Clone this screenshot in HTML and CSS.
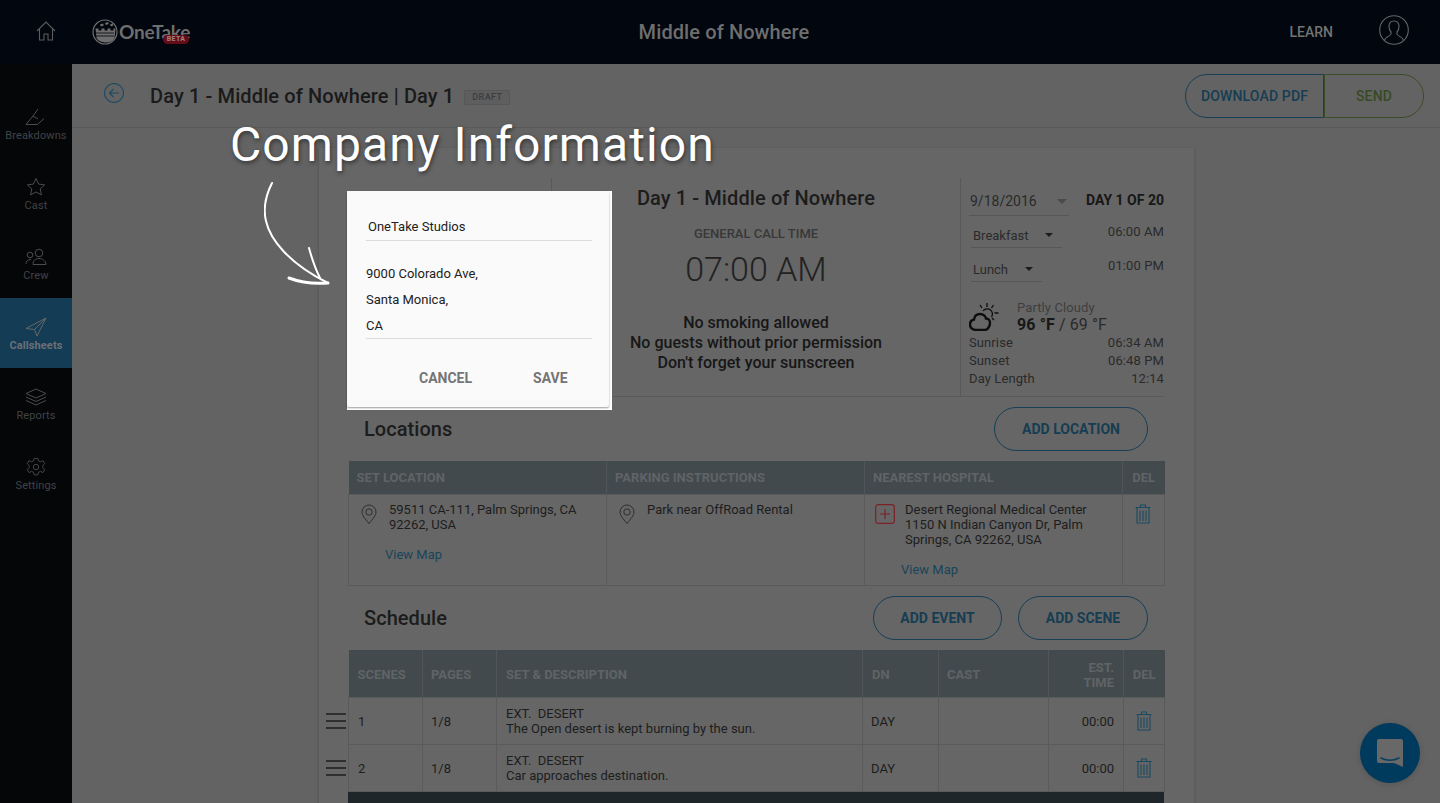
FILE: index.html
```html
<!DOCTYPE html>
<html lang="en">
<head>
<meta charset="utf-8">
<title>Callsheet</title>
<link rel="stylesheet" href="styles.css">
</head>
<body>
<div class="app">
  <header class="topbar">
    <svg class="home" viewBox="0 0 20 20" width="20" height="20"><path d="M1 10 10 1l9 9M3.500 8v11H8v-6h4v6h4.500V8"/></svg>
    <div class="logo">
      <svg viewBox="0 0 26 26" width="26" height="26"><circle cx="13" cy="13" r="12" class="logo-ring"/><path class="logo-fill" d="M3.500 9.500h3v2h3v-2h3v2h3v-2h3v2h3v-2h2l-1 9.500c-1.500 3-5 4.500-8.500 4.500S6 22 4.500 19zM8 5.500l3-1 .8 2-3 1zM13 4l3-1 .8 2-3 1zM18 5.500l2.500-1 .8 2-2.500 1z"/><path class="logo-cut" d="M4 14h18M4 17h18"/></svg>
      <span class="logo-text">OneTake</span>
      <span class="beta">BETA</span>
    </div>
    <div class="top-title">Middle of Nowhere</div>
    <div class="learn">LEARN</div>
    <svg class="user" viewBox="0 0 30 30" width="30" height="30"><circle cx="15" cy="15" r="14.300"/><path d="M5.500 25.500c.5-4 6-4 6.500-6.500v-2c-1.500-1.500-2-3.500-2-5.500C10 8 12 6 15 6s5 2 5 5.500c0 2-.5 4-2 5.500v2c.5 2.500 6 2.500 6.500 6.500"/></svg>
  </header>
  <div class="workspace">
    <nav class="sidebar">
      <a class="nav-item"><svg viewBox="0 0 22 18" width="22" height="18"><path d="M1 16.500h11.500L19 10.500M1 16.500 8 8l5 3M8 8l5-7"/></svg><span>Breakdowns</span></a>
      <a class="nav-item"><svg viewBox="0 0 20 20" width="20" height="20"><path d="M10 1.500l2.600 5.600 6 .7-4.400 4.100 1.200 6L10 15l-5.400 2.900 1.200-6L1.400 7.800l6-.7z"/></svg><span>Cast</span></a>
      <a class="nav-item"><svg viewBox="0 0 22 18" width="22" height="18"><circle cx="14" cy="5" r="3.800"/><circle cx="5" cy="7" r="2.800"/><path d="M8 16.500c0-4 2.500-6 6-6s6.500 2 7 6zM1 16c0-2.500 1.500-4.500 5-4.500"/></svg><span>Crew</span></a>
      <a class="nav-item active"><svg viewBox="0 0 22 20" width="22" height="20"><path d="M21 1 1 11.500l8.500 1 2.500 6.500zM21 1 9.500 12.500"/></svg><span>Callsheets</span></a>
      <a class="nav-item"><svg viewBox="0 0 22 18" width="22" height="18"><path d="M11 1l10 4.500-10 4.500L1 5.500zM1 9l10 4.500L21 9M1 12.500 11 17l10-4.500"/></svg><span>Reports</span></a>
      <a class="nav-item"><svg viewBox="0 0 22 22" width="22" height="22"><circle cx="11" cy="11" r="3"/><path d="M9 1.500h4l.7 2.800 2.400 1 2.500-1.400 2 3.400-2.100 2 0 2.500 2.100 2-2 3.400-2.500-1.400-2.400 1-.7 2.800H9l-.7-2.800-2.400-1-2.500 1.400-2-3.400 2.100-2v-2.500l-2.100-2 2-3.400 2.500 1.400 2.400-1z"/></svg><span>Settings</span></a>
    </nav>
    <main class="main">
      <div class="subheader">
        <svg class="back" viewBox="0 0 20 20" width="20" height="20"><circle cx="10" cy="10" r="9.500"/><path d="M15 10H5.500M9.500 6l-4 4 4 4"/></svg>
        <h1 class="page-title">Day 1 - Middle of Nowhere | Day 1</h1>
        <span class="draft">DRAFT</span>
        <div class="split-btn">
          <button class="split-left">DOWNLOAD PDF</button>
          <button class="split-right">SEND</button>
        </div>
      </div>
      <div class="canvas">
        <section class="sheet">
          <div class="sheet-top">
            <div class="company-col"></div>
            <div class="call-col">
              <h2 class="call-heading">Day 1 - Middle of Nowhere</h2>
              <div class="call-label">GENERAL CALL TIME</div>
              <div class="call-time">07:00 AM</div>
              <p class="call-notes">No smoking allowed<br>No guests without prior permission<br>Don't forget your sunscreen</p>
            </div>
            <div class="info-col">
              <div class="info-row date-row">
                <span class="select date-select">9/18/2016<i class="caret caret-grey"></i></span>
                <strong>DAY 1 OF 20</strong>
              </div>
              <div class="info-row meal-row">
                <span class="select breakfast">Breakfast<i class="caret"></i></span>
                <span class="meal-time">06:00 AM</span>
              </div>
              <div class="info-row meal-row">
                <span class="select lunch">Lunch<i class="caret"></i></span>
                <span class="meal-time">01:00 PM</span>
              </div>
              <div class="weather">
                <svg viewBox="0 0 30 28" width="30" height="28"><path class="wx-thick" d="M7 27c-3.500 0-6-2.500-6-5.500s2-4.500 4-5c.5-3.500 3-5.500 6-5.500s5.500 2 6 4.500c2.500 0 4 2 4 4.500s-2 7-5 7z"/><path class="wx-thin" d="M14 8a5.200 5.200 0 1 1 8.500 6M18 0v4M11 2l2 3M24.500 2l-2 3M29.500 10h-4M25 17l-2-2"/></svg>
                <div class="wx-text">
                  <div class="wx-desc">Partly Cloudy</div>
                  <div class="wx-temp"><b>96 °F</b> / 69 °F</div>
                </div>
              </div>
              <div class="info-row sun-row"><span>Sunrise</span><span>06:34 AM</span></div>
              <div class="info-row sun-row"><span>Sunset</span><span>06:48 PM</span></div>
              <div class="info-row sun-row"><span>Day Length</span><span>12:14</span></div>
            </div>
          </div>

          <div class="section-head loc-head">
            <h3>Locations</h3>
            <div class="actions"><button class="pill pill-loc">ADD LOCATION</button></div>
          </div>
          <table class="grid loc-table">
            <colgroup><col class="lc1"><col class="lc2"><col class="lc3"><col class="lc4"></colgroup>
            <thead><tr><th>SET LOCATION</th><th>PARKING INSTRUCTIONS</th><th>NEAREST HOSPITAL</th><th class="del-h">DEL</th></tr></thead>
            <tbody>
              <tr>
                <td>
                  <div class="loc-cell">
                    <svg class="pin" viewBox="0 0 16 20" width="16" height="20"><path d="M8 19.500C4 14.500 1 11.500 1 8a7 7 0 0 1 14 0c0 3.500-3 6.500-7 11.500z"/><circle cx="8" cy="8" r="3.200"/></svg>
                    <div>59511 CA-111, Palm Springs, CA 92262, USA</div>
                  </div>
                  <a class="map-link">View Map</a>
                </td>
                <td>
                  <div class="loc-cell">
                    <svg class="pin" viewBox="0 0 16 20" width="16" height="20"><path d="M8 19.500C4 14.500 1 11.500 1 8a7 7 0 0 1 14 0c0 3.500-3 6.500-7 11.500z"/><circle cx="8" cy="8" r="3.200"/></svg>
                    <div>Park near OffRoad Rental</div>
                  </div>
                </td>
                <td>
                  <div class="loc-cell hosp-cell">
                    <svg class="plus" viewBox="0 0 20 20" width="20" height="20"><rect x=".7" y=".7" width="18.600" height="18.600" rx="2.500"/><path d="M10 5v10M5 10h10"/></svg>
                    <div>Desert Regional Medical Center<br>1150 N Indian Canyon Dr, Palm Springs, CA 92262, USA</div>
                  </div>
                  <a class="map-link">View Map</a>
                </td>
                <td class="del-cell">
                  <svg class="trash" viewBox="0 0 16 20" width="16" height="20"><path d="M.5 3.500h15M5.500 3.500V1h5v2.500M2 3.500V19h12V3.500M5 6.500V17M8 6.500V17M11 6.500V17"/></svg>
                </td>
              </tr>
            </tbody>
          </table>

          <div class="section-head sch-head">
            <h3>Schedule</h3>
            <div class="actions"><button class="pill pill-event">ADD EVENT</button><button class="pill pill-scene">ADD SCENE</button></div>
          </div>
          <table class="grid sch-table">
            <colgroup><col class="sc1"><col class="sc2"><col class="sc3"><col class="sc4"><col class="sc5"><col class="sc6"><col class="sc7"></colgroup>
            <thead><tr><th>SCENES</th><th>PAGES</th><th>SET &amp; DESCRIPTION</th><th>DN</th><th>CAST</th><th class="num">EST.<br>TIME</th><th class="del-h">DEL</th></tr></thead>
            <tbody>
              <tr>
                <td class="scene-no"><span class="drag"><i></i><i></i><i></i></span>1</td>
                <td>1/8</td>
                <td>EXT.&nbsp; DESERT<br>The Open desert is kept burning by the sun.</td>
                <td>DAY</td>
                <td></td>
                <td class="num">00:00</td>
                <td class="del-cell"><svg class="trash" viewBox="0 0 16 20" width="16" height="20"><path d="M.5 3.500h15M5.500 3.500V1h5v2.500M2 3.500V19h12V3.500M5 6.500V17M8 6.500V17M11 6.500V17"/></svg></td>
              </tr>
              <tr>
                <td class="scene-no"><span class="drag"><i></i><i></i><i></i></span>2</td>
                <td>1/8</td>
                <td>EXT.&nbsp; DESERT<br>Car approaches destination.</td>
                <td>DAY</td>
                <td></td>
                <td class="num">00:00</td>
                <td class="del-cell"><svg class="trash" viewBox="0 0 16 20" width="16" height="20"><path d="M.5 3.500h15M5.500 3.500V1h5v2.500M2 3.500V19h12V3.500M5 6.500V17M8 6.500V17M11 6.500V17"/></svg></td>
              </tr>
            </tbody>
          </table>
          <div class="sch-foot"></div>
        </section>
      </div>
    </main>
  </div>

  <div class="callout-title">Company Information</div>
  <svg class="callout-arrow" viewBox="0 0 70 106" width="70" height="106"><path d="M8 2C2 14-1 28 2 40c4 18 22 42 62 62M45 67c3 11 6 20 11 30"/><path class="arrow-barb" d="M25 97c13 5 26 6 39 5"/></svg>

  <div class="spotlight">
    <form class="dialog">
      <div class="field name-field">OneTake Studios</div>
      <div class="field addr-field">9000 Colorado Ave,<br>Santa Monica,<br>CA</div>
      <div class="dialog-actions"><span class="btn-cancel">CANCEL</span><span class="btn-save">SAVE</span></div>
    </form>
  </div>

  <div class="chat">
    <svg viewBox="0 0 28 30" width="28" height="30"><path class="chat-body" d="M3 1h22a2 2 0 0 1 2 2v26l-9-4H3a2 2 0 0 1-2-2V3a2 2 0 0 1 2-2z"/><path class="chat-smile" d="M5 20c5 3 13 3 18 0"/></svg>
  </div>
</div>
</body>
</html>
```

FILE: styles.css
```css
* { box-sizing: border-box; }
html, body { margin: 0; height: 100%; overflow: hidden; }
body { font-family: Roboto, "Liberation Sans", sans-serif; color: #1a1a1a; background: #636363; }
h1, h2, h3, p { margin: 0; }
button { font-family: inherit; background: none; cursor: pointer; }
svg { display: block; fill: none; flex: none; }

.app { position: relative; display: flex; flex-direction: column; height: 803px; overflow: hidden; }

/* top bar */
.topbar { height: 64px; flex: none; background: #01060f; display: flex; align-items: center; position: relative; }
.home { margin: -2px 0 0 36px; stroke: #5c5c5c; stroke-width: 1.1; }
.logo { display: flex; align-items: center; height: 26px; margin: -1px 0 0 36px; position: relative; }
.logo-ring { stroke: #6e6e6e; stroke-width: 1.2; }
.logo-fill { fill: #6e6e6e; }
.logo-cut { stroke: #01060f; stroke-width: .8; }
.logo-text { font-family: Lato, sans-serif; font-weight: 700; font-size: 19px; letter-spacing: -.2px; color: #6e6e6e; margin-left: 1px; }
.beta { position: absolute; left: 71px; top: 16px; width: 26px; height: 9px; border-radius: 5px; background: #640d19; color: #a08084; font-size: 7px; font-weight: 700; line-height: 9px; text-align: center; letter-spacing: .3px; }
.top-title { position: absolute; left: 0; width: 1448px; text-align: center; top: 20px; font-size: 20px; line-height: 24px; font-weight: 500; color: #6e6e6e; letter-spacing: .1px; }
.learn { margin-left: auto; font-size: 14px; font-weight: 500; color: #737373; margin-top: -1px; }
.user { margin: -4px 31px 0 46px; stroke: #666; stroke-width: 1.1; }

/* sidebar */
.workspace { flex: 1; display: flex; min-height: 0; }
.sidebar { width: 72px; flex: none; background: #050608; padding-top: 24px; display: flex; flex-direction: column; }
.nav-item { height: 70px; display: flex; flex-direction: column; align-items: center; justify-content: flex-start; font-size: 11px; line-height: 13px; color: #414346; letter-spacing: .1px; }
.nav-item svg { height: 20px; margin-top: 19px; margin-bottom: 2px; stroke: #4b4c4e; stroke-width: 1; }
.nav-item.active { background: #153c55; color: #6a7076; font-weight: 700; }
.nav-item.active svg { stroke: #666; }

/* sub header */
.main { flex: 1; min-width: 0; display: flex; flex-direction: column; }
.subheader { height: 64px; flex: none; border-bottom: 1px solid #595959; display: flex; align-items: center; padding-left: 32px; padding-right: 16px; }
.back { margin-top: -5px; stroke: #1a4a62; stroke-width: 1.1; }
.page-title { font-size: 20px; font-weight: 500; line-height: 24px; margin-left: 26px; color: #1a1a1a; margin-top: 1px; letter-spacing: .12px; }
.draft { margin-left: 10px; margin-top: 3px; height: 15px; width: 46px; border: 1px solid #575757; background: #5e5e5e; color: #3d3d3d; font-size: 9px; font-weight: 500; line-height: 13px; text-align: center; letter-spacing: .4px; border-radius: 1px; }
.split-btn { margin-left: auto; margin-top: 1px; display: flex; }
.split-left, .split-right { height: 44px; font-size: 14px; font-weight: 500; letter-spacing: .15px; padding: 0; }
.split-left { width: 139px; border: 1px solid #173f55; border-radius: 22px 0 0 22px; color: #163d52; }
.split-right { width: 100px; border: 1px solid #3b4d27; border-radius: 0 22px 22px 0; color: #384a24; }

/* sheet */
.canvas { flex: 1; min-height: 0; padding: 20px 0 0 246px; overflow: hidden; }
.sheet { width: 877px; padding: 0 30px 0 29px; background: #666; border-left: 1px solid #5a5a5a; border-right: 1px solid #5d5d5d; box-shadow: 0 0 2px rgba(0,0,0,.12); }
.sheet-top { display: flex; height: 249px; padding-top: 30px; border-bottom: 1px solid #5a5a5a; }
.company-col { width: 204px; flex: none; border-right: 1px solid #595959; }
.call-col { flex: 1; text-align: center; padding-top: 8px; }
.call-heading { font-size: 20px; line-height: 24px; font-weight: 500; color: #1c1c1c; letter-spacing: .1px; }
.call-label { font-size: 13px; font-weight: 500; line-height: 14px; color: #383838; margin-top: 17px; }
.call-time { font-size: 34px; line-height: 40px; font-weight: 300; color: #222; margin-top: 8px; }
.call-notes { font-size: 16px; line-height: 20px; font-weight: 500; color: #171717; margin-top: 24px; letter-spacing: .02px; }

.info-col { width: 204px; flex: none; border-left: 1px solid #595959; padding-left: 8px; font-size: 13px; color: #2a2a2a; }
.info-row { display: flex; justify-content: space-between; }
.select { display: flex; align-items: center; justify-content: space-between; border-bottom: 1px solid #565656; }
.date-row { height: 38px; align-items: flex-start; padding-top: 14px; }
.date-row strong { font-size: 14px; font-weight: 700; color: #171717; line-height: 16px; }
.date-select { width: 100px; height: 24px; font-size: 14px; padding: 1px 2px 6px 1px; }
.caret { width: 0; height: 0; border-left: 5px solid transparent; border-right: 5px solid transparent; border-top: 5px solid #1c1c1c; }
.caret-grey { border-top-color: #4b4b4b; }
.meal-row { height: 34px; align-items: flex-start; }
.breakfast { width: 91px; height: 32px; margin: 0 0 0 2px; padding: 7px 9px 0 2px; font-size: 13px; }
.lunch { width: 71px; height: 32px; margin: 0 0 0 2px; padding: 7px 9px 0 2px; font-size: 13px; }
.breakfast .caret, .lunch .caret { border-width: 4px 4px 0; }
.meal-time { padding-top: 8px; font-size: 13px; letter-spacing: .1px; }
.weather { display: flex; margin-top: 18px; height: 32px; align-items: flex-start; }
.weather svg { margin-top: 1px; }
.wx-thick { stroke: #0d0d0d; stroke-width: 2.4; }
.wx-thin { stroke: #0d0d0d; stroke-width: 1.3; }
.wx-text { margin-left: 18px; margin-top: -2px; }
.wx-desc { font-size: 13px; line-height: 16px; color: #3e3e3e; letter-spacing: .1px; }
.wx-temp { font-size: 16px; line-height: 17px; color: #2a2a2a; letter-spacing: .1px; }
.wx-temp b { font-weight: 700; color: #171717; }
.sun-row { height: 18px; line-height: 18px; letter-spacing: .1px; }

/* sections */
.section-head { display: flex; align-items: center; justify-content: space-between; padding: 0 16px; }
.section-head h3 { font-size: 20px; line-height: 24px; font-weight: 500; color: #1c1c1c; letter-spacing: .05px; }
.loc-head { height: 64px; }
.sch-head { height: 64px; }
.actions { display: flex; gap: 16px; }
.pill { height: 44px; border: 1px solid #173f55; border-radius: 22px; color: #163d52; font-size: 14px; font-weight: 700; padding: 0; }
.pill-loc { width: 154px; }
.pill-event { width: 129px; }
.pill-scene { width: 130px; }

/* tables */
.grid { width: 816px; border-collapse: collapse; table-layout: fixed; font-size: 13px; line-height: 15px; }
.grid th { background: #434a4d; color: #5f6466; font-size: 13px; font-weight: 700; text-align: left; padding: 1px 8px 0; border-left: 1px solid #4f5558; line-height: 15px; }
.grid th:first-child { border-left: 0; }
.grid td { border: 1px solid #5a5a5a; vertical-align: top; color: #1d1d1d; padding: 0; }
.grid .del-h { text-align: center; padding-left: 0; padding-right: 0; }
.del-cell svg { margin: 0 0 0 12px; }
.lc1 { width: 258px; } .lc2 { width: 258px; } .lc3 { width: 258px; } .lc4 { width: 42px; }
.loc-table thead tr { height: 33px; }
.loc-table tbody tr { height: 91px; }
.loc-table td { padding-top: 7px; }
.loc-table .del-cell .trash { margin-top: 2px; }
.loc-cell { display: flex; gap: 12px; padding: 0 24px 0 12px; }
.hosp-cell { padding-left: 10px; gap: 10px; padding-right: 24px; }
.pin { margin-top: 2px; stroke: #2e2e2e; stroke-width: 1; }
.plus { margin-top: 2px; stroke: #7a2227; stroke-width: 1.2; }
.trash { stroke: #1a4a62; stroke-width: 1.1; margin-top: 1px; }
.map-link { display: block; color: #194459; line-height: 15px; margin: 15px 0 0 36px; }

.sc1 { width: 74px; } .sc2 { width: 74px; } .sc3 { width: 366px; } .sc4 { width: 76px; } .sc5 { width: 110px; } .sc6 { width: 75px; } .sc7 { width: 41px; }
.sch-table thead tr { height: 48px; }
.sch-table tbody tr { height: 47px; }
.sch-table td { vertical-align: middle; padding: 0 8px; }
.sch-table td:first-child, .sch-table th:first-child { padding-left: 9px; }
.sch-table th { padding-top: 3px; }
.sch-table th:nth-child(3), .sch-table th:nth-child(4), .sch-table td:nth-child(3) { padding-left: 9px; }
.sch-table .num { text-align: right; padding-right: 9px; }
.sch-table .del-cell { padding: 0; }
.scene-no { position: relative; }
.drag { position: absolute; left: -23px; top: 15px; width: 20px; }
.drag i { display: block; height: 2px; background: #2f2f2f; margin-bottom: 5px; }
.sch-foot { height: 20px; width: 816px; background: #1f2629; }

/* overlay pieces */
.callout-title { position: absolute; left: 230px; top: 117px; font-size: 48px; line-height: 56px; font-weight: 400; color: #fff; letter-spacing: 1.08px; text-shadow: 1px 2px 4px rgba(0,0,0,.5); }
.callout-arrow { position: absolute; left: 264px; top: 181px; stroke: #fff; stroke-width: 2; stroke-linecap: round; }
.arrow-barb { stroke-width: 3; }
.spotlight { position: absolute; left: 347px; top: 191px; width: 265px; height: 219px; background: #fff; padding: 0 3px 3px 0; }
.dialog { height: 100%; background: #fafafa; border-radius: 2px; box-shadow: 0 1px 2px rgba(0,0,0,.4); padding: 0 17px 0 19px; font-size: 13px; color: #212121; display: flex; flex-direction: column; }
.field { border-bottom: 1px solid #dcdcdc; }
.name-field { height: 50px; padding: 28px 0 0 2px; line-height: 15px; }
.addr-field { margin-top: 20px; height: 78px; line-height: 26px; }
.dialog-actions { display: flex; margin-top: 31px; font-size: 14px; font-weight: 700; color: #757575; line-height: 16px; }
.btn-cancel { margin-left: 53px; }
.btn-save { margin-left: 61px; }

.chat { position: absolute; left: 1360px; top: 723px; width: 60px; height: 60px; border-radius: 50%; background: #003a5c; display: flex; align-items: center; justify-content: center; box-shadow: 0 1px 6px rgba(0,0,0,.15); }
.chat-body { fill: #686868; }
.chat-smile { stroke: #0a4060; stroke-width: 1.5; stroke-linecap: round; }
```
